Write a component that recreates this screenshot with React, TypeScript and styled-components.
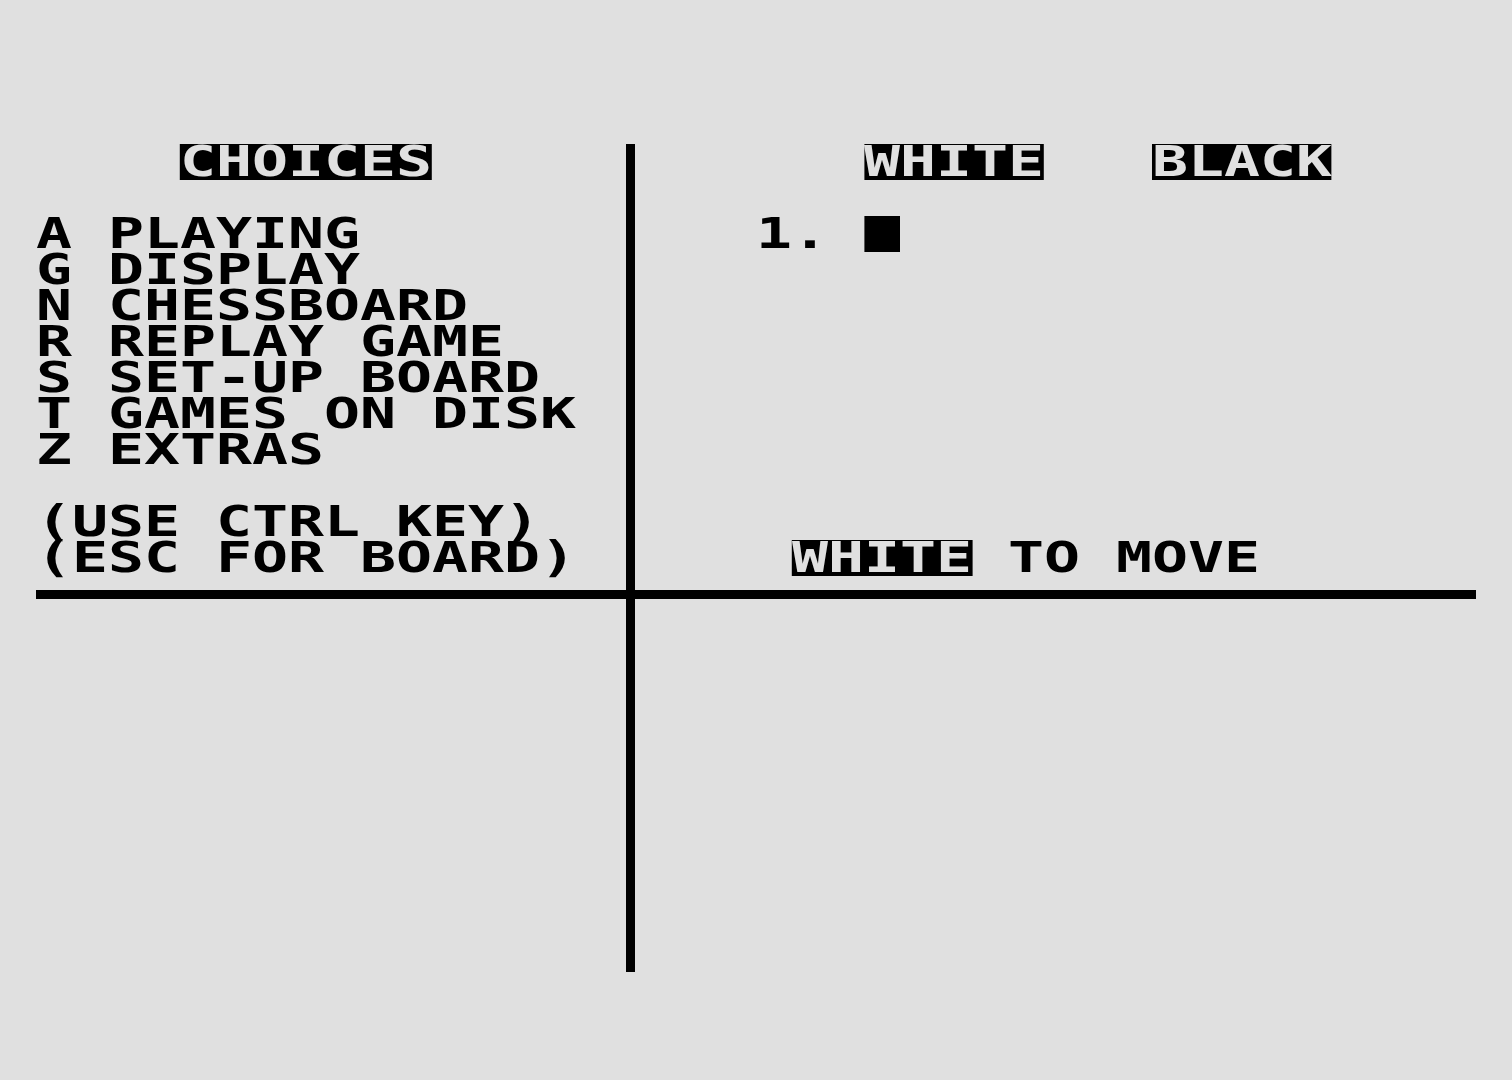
import React from "react";
import styled, { createGlobalStyle } from "styled-components";

const CELL = 36;
const FONT_SIZE = 42;
// DejaVu Sans Mono advance = 1233/2048 em; stretch glyphs so one char fills one 36px cell
const STRETCH = CELL / (FONT_SIZE * (1233 / 2048));

const Global = createGlobalStyle`
  html, body {
    margin: 0;
    padding: 0;
    background: #e0e0e0;
  }
  body {
    width: 1512px;
    height: 1080px;
    overflow: hidden;
    font-family: "DejaVu Sans Mono", "Liberation Mono", monospace;
  }
`;

const Screen = styled.div`
  display: grid;
  grid-template-columns: ${CELL * 16}px ${CELL}px ${CELL * 23}px;
  grid-template-rows: ${CELL * 12}px ${CELL}px ${CELL * 10}px;
  align-content: start;
  padding: ${CELL * 4}px 0 0 ${CELL}px;
  width: ${CELL * 40}px;
  height: ${1080 - CELL * 4}px;
  background: #e0e0e0;
  color: #000;
`;

const Panel = styled.div<{ $col: number }>`
  grid-column: ${(p) => p.$col};
  grid-row: 1;
  display: flex;
  flex-direction: column;
  align-items: flex-start;
`;

const Line = styled.div`
  width: max-content;
  height: ${CELL}px;
  line-height: ${CELL}px;
  font-size: ${FONT_SIZE}px;
  font-weight: bold;
  white-space: pre;
  letter-spacing: 0;
  transform: scaleX(${STRETCH});
  transform-origin: 0 0;
`;

const Inverse = styled.span`
  display: inline-block;
  height: ${CELL}px;
  line-height: ${CELL}px;
  vertical-align: top;
  background: #000;
  color: #e0e0e0;
`;

const Cursor = styled.span`
  display: inline-block;
  width: 1ch;
  height: ${CELL}px;
  vertical-align: top;
  background: #000;
`;

const VRule = styled.div`
  grid-column: 2;
  grid-row: 1 / span 3;
  justify-self: center;
  width: 9px;
  height: ${CELL * 23}px;
  background: #000;
`;

const HRule = styled.div`
  grid-column: 1 / -1;
  grid-row: 2;
  align-self: center;
  height: 9px;
  background: #000;
`;

const menu = [
  "A PLAYING",
  "G DISPLAY",
  "N CHESSBOARD",
  "R REPLAY GAME",
  "S SET-UP BOARD",
  "T GAMES ON DISK",
  "Z EXTRAS",
];

export default function App() {
  return (
    <>
      <Global />
      <Screen>
        <Panel $col={1}>
          <Line>
            {"    "}
            <Inverse>CHOICES</Inverse>
          </Line>
          <Line> </Line>
          {menu.map((m) => (
            <Line key={m}>{m}</Line>
          ))}
          <Line> </Line>
          <Line>(USE CTRL KEY)</Line>
          <Line>(ESC FOR BOARD)</Line>
        </Panel>
        <Panel $col={3}>
          <Line>
            {"      "}
            <Inverse>WHITE</Inverse>
            {"   "}
            <Inverse>BLACK</Inverse>
          </Line>
          <Line> </Line>
          <Line>
            {"   1. "}
            <Cursor />
          </Line>
          {Array.from({ length: 8 }).map((_, i) => (
            <Line key={i}> </Line>
          ))}
          <Line>
            {"    "}
            <Inverse>WHITE</Inverse>
            {" TO MOVE"}
          </Line>
        </Panel>
        <HRule />
        <VRule />
      </Screen>
    </>
  );
}
